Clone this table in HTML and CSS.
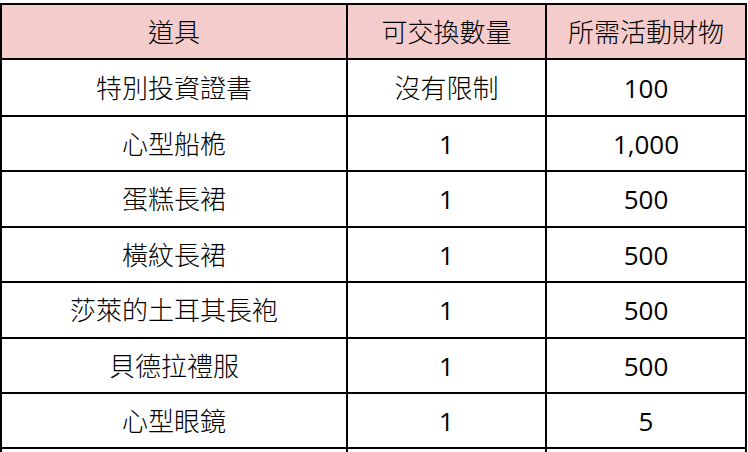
FILE: index.html
```html
<!DOCTYPE html>
<html lang="zh-Hant">
<head>
<meta charset="utf-8">
<title>道具兌換表</title>
<link rel="stylesheet" href="styles.css">
</head>
<body>
<div class="sheet">
  <div class="cell head">道具</div>
  <div class="cell head">可交換數量</div>
  <div class="cell head">所需活動財物</div>

  <div class="cell">特別投資證書</div>
  <div class="cell">沒有限制</div>
  <div class="cell num">100</div>

  <div class="cell">心型船桅</div>
  <div class="cell num">1</div>
  <div class="cell num">1,000</div>

  <div class="cell">蛋糕長裙</div>
  <div class="cell num">1</div>
  <div class="cell num">500</div>

  <div class="cell">橫紋長裙</div>
  <div class="cell num">1</div>
  <div class="cell num">500</div>

  <div class="cell">莎萊的土耳其長袍</div>
  <div class="cell num">1</div>
  <div class="cell num">500</div>

  <div class="cell">貝德拉禮服</div>
  <div class="cell num">1</div>
  <div class="cell num">500</div>

  <div class="cell">心型眼鏡</div>
  <div class="cell num">1</div>
  <div class="cell num">5</div>

  <div class="cell"></div>
  <div class="cell"></div>
  <div class="cell"></div>
</div>
</body>
</html>
```
FILE: styles.css
```css
html, body {
  margin: 0;
  padding: 0;
  background: #ffffff;
  overflow: hidden;
}

body {
  padding-top: 3px;
  font-family: "Open Sans", "Noto Sans CJK TC", sans-serif;
  font-size: 26px;
  color: #000000;
}

.sheet {
  display: grid;
  width: 747px;
  box-sizing: border-box;
  grid-template-columns: 344px 197px 198px;
  grid-template-rows: 53px 55px 53px 54px 53px 54px 53px 53px 53px;
  gap: 2px;
  padding: 2px;
  background: #000000;
}

.cell {
  background: #ffffff;
  display: flex;
  align-items: center;
  justify-content: center;
  line-height: 1;
  white-space: nowrap;
  font-weight: 300;
}

.num {
  font-weight: 400;
}

.head {
  background: #f4cccc;
}
```
